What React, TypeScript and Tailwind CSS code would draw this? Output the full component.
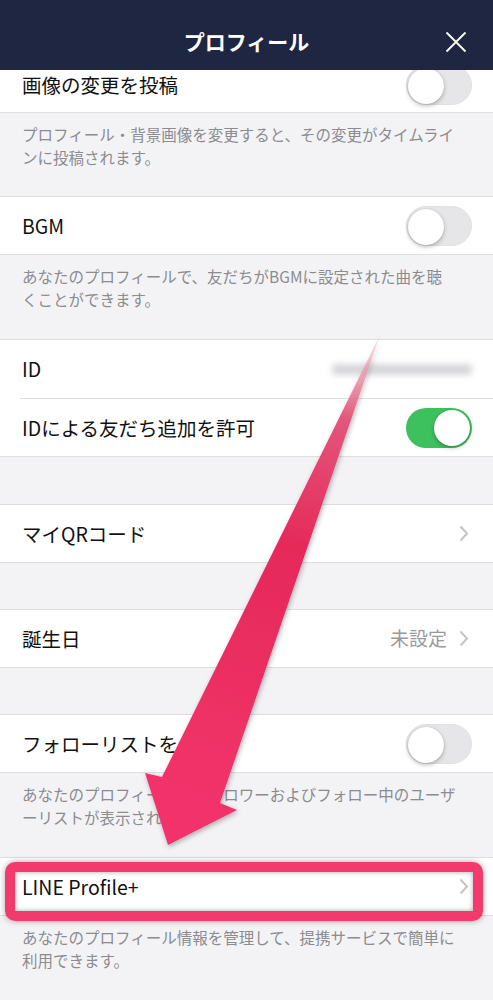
import React from "react";

const font = "font-['Noto_Sans_CJK_JP','Noto_Sans',sans-serif]";

function Toggle({ on = false }: { on?: boolean }) {
  return (
    <div
      className={`relative h-[40px] w-[66px] rounded-full ${
        on ? "bg-[#3dc05e]" : "bg-[#e6e6e9] border border-[#e2e2e5]"
      }`}
    >
      <div
        className={`absolute top-[2px] h-[36px] w-[36px] rounded-full bg-white shadow-[0_2px_4px_rgba(0,0,0,0.25),0_0_1px_rgba(0,0,0,0.2)] ${
          on ? "right-[2px]" : "left-[1px] top-[1px]"
        }`}
      />
    </div>
  );
}

function Chevron() {
  return (
    <svg width="10" height="17" viewBox="0 0 10 17" className="ml-[12px]">
      <path d="M1.5 1.5 L8 8.5 L1.5 15.5" fill="none" stroke="#c4c4c8" strokeWidth="2" />
    </svg>
  );
}

function Row({
  label,
  right,
  h = "h-[57px]",
  pr = "pr-[21px]",
}: {
  label: string;
  right?: React.ReactNode;
  h?: string;
  pr?: string;
}) {
  return (
    <div className={`flex ${h} items-center justify-between bg-white pl-[22px] ${pr}`}>
      <span className="text-[19.5px] text-[#111]">{label}</span>
      <div className="flex items-center">{right}</div>
    </div>
  );
}

function Desc({ lines, h = "h-[84px]" }: { lines: [string, string]; h?: string }) {
  return (
    <div className={`${h} bg-[#f3f3f5] px-[22px] pt-[10px] text-[15.5px] leading-[22.5px] text-[#8b8b90]`}>
      <p className="whitespace-nowrap">
        {lines[0]}
        <br />
        {lines[1]}
      </p>
    </div>
  );
}

function Group({ children }: { children: React.ReactNode }) {
  return <div className="border-y border-[#dedee1] bg-white">{children}</div>;
}

export default function App() {
  return (
    <div className={`relative h-[1000px] w-[493px] overflow-hidden bg-[#f3f3f5] ${font}`}>
      {/* Header */}
      <div className="relative flex h-[70px] items-start justify-center bg-[#1f2642] pt-[20px]">
        <div className="flex h-[44px] items-center text-[21px] font-bold text-white">プロフィール</div>
        <svg
          width="22"
          height="22"
          viewBox="0 0 22 22"
          className="absolute right-[26px] top-[31px]"
        >
          <path d="M1.5 1.5 L20.5 20.5 M20.5 1.5 L1.5 20.5" stroke="#fff" strokeWidth="1.8" fill="none" />
        </svg>
      </div>

      {/* Row 1 (scrolled, partially hidden) */}
      <div className="h-[43px] overflow-hidden border-b border-[#dedee1] bg-white">
        <div className="-mt-[14px]">
          <Row label="画像の変更を投稿" right={<Toggle />} />
        </div>
      </div>
      <Desc
        h="h-[83px]"
        lines={[
          "プロフィール・背景画像を変更すると、その変更がタイムライ",
          "ンに投稿されます。",
        ]}
      />

      <Group>
        <Row label="BGM" right={<Toggle />} />
      </Group>
      <Desc
        lines={[
          "あなたのプロフィールで、友だちがBGMに設定された曲を聴",
          "くことができます。",
        ]}
      />

      <Group>
        <Row
          label="ID"
          h="h-[58px]"
          right={<div className="h-[11px] w-[140px] rounded bg-[#d6d6da] blur-[3px]" />}
        />
        <div className="ml-[20px] h-px bg-[#dedee1]" />
        <Row label="IDによる友だち追加を許可" right={<Toggle on />} />
      </Group>
      <div className="h-[47px]" />

      <Group>
        <Row label="マイQRコード" pr="pr-[24px]" right={<Chevron />} />
      </Group>
      <div className="h-[46px]" />

      <Group>
        <Row
          label="誕生日"
          pr="pr-[24px]"
          right={
            <>
              <span className="text-[19px] text-[#9a9a9e]">未設定</span>
              <Chevron />
            </>
          }
        />
      </Group>
      <div className="h-[46px]" />

      <Group>
        <Row label="フォローリストを公開" right={<Toggle />} />
      </Group>
      <Desc
        lines={[
          "あなたのプロフィールにフォロワーおよびフォロー中のユーザ",
          "ーリストが表示されます。",
        ]}
      />

      <Group>
        <Row label="LINE Profile+" pr="pr-[24px]" right={<Chevron />} />
      </Group>
      <Desc
        lines={[
          "あなたのプロフィール情報を管理して、提携サービスで簡単に",
          "利用できます。",
        ]}
      />

      {/* Highlight box overlay */}
      <div className="pointer-events-none absolute left-[5px] top-[862px] h-[59px] w-[478px] rounded-[10px] border-[10px] border-[#f23a6c] shadow-[0_0_6px_rgba(0,0,0,0.35),inset_0_0_5px_rgba(0,0,0,0.35)]" />

      {/* Arrow overlay */}
      <svg
        className="pointer-events-none absolute left-0 top-0"
        width="493"
        height="1000"
        viewBox="0 0 493 1000"
      >
        <defs>
          <linearGradient id="ag" x1="380" y1="335" x2="190" y2="800" gradientUnits="userSpaceOnUse">
            <stop offset="0" stopColor="#f3b6c6" stopOpacity="0.4" />
            <stop offset="0.18" stopColor="#e4567c" />
            <stop offset="0.45" stopColor="#e52a5a" />
            <stop offset="1" stopColor="#f2336a" />
          </linearGradient>
          <filter id="sh" x="-20%" y="-20%" width="140%" height="140%">
            <feDropShadow dx="1" dy="2" stdDeviation="2.5" floodColor="#000" floodOpacity="0.3" />
          </filter>
        </defs>
        <polygon
          points="380,335 220,803 237,810 168,845 145,773 162,777"
          fill="url(#ag)"
          filter="url(#sh)"
        />
      </svg>
    </div>
  );
}
